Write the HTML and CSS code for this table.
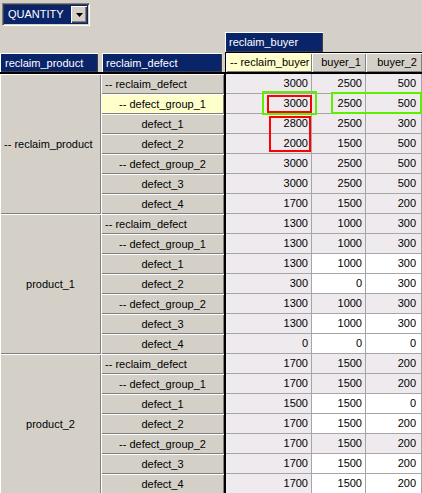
FILE: index.html
```html
<!DOCTYPE html>
<html>
<head>
<meta charset="utf-8">
<link rel="stylesheet" href="styles.css">
</head>
<body>
<div class="toolbar">
  <div class="combo">
    <span class="combo-value">QUANTITY</span>
    <span class="combo-btn"><svg width="7" height="4" viewBox="0 0 7 4"><polygon points="0,0 7,0 3.5,4" fill="#000"/></svg></span>
  </div>
</div>
<div class="pivot">
  <div class="rowpane">
    <div class="rowheads">
      <div class="field field-product">reclaim_product</div>
      <div class="field field-defect">reclaim_defect</div>
    </div>
    <div class="rowbody">
      <div class="group">
        <div class="prod prod-left">-- reclaim_product</div>
        <div class="defects">
          <div class="dcell dcell-left">-- reclaim_defect</div>
          <div class="dcell dcell-hl">-- defect_group_1</div>
          <div class="dcell">defect_1</div>
          <div class="dcell">defect_2</div>
          <div class="dcell">-- defect_group_2</div>
          <div class="dcell">defect_3</div>
          <div class="dcell">defect_4</div>
        </div>
      </div>
      <div class="group">
        <div class="prod">product_1</div>
        <div class="defects">
          <div class="dcell dcell-left">-- reclaim_defect</div>
          <div class="dcell">-- defect_group_1</div>
          <div class="dcell">defect_1</div>
          <div class="dcell">defect_2</div>
          <div class="dcell">-- defect_group_2</div>
          <div class="dcell">defect_3</div>
          <div class="dcell">defect_4</div>
        </div>
      </div>
      <div class="group">
        <div class="prod">product_2</div>
        <div class="defects">
          <div class="dcell dcell-left">-- reclaim_defect</div>
          <div class="dcell">-- defect_group_1</div>
          <div class="dcell">defect_1</div>
          <div class="dcell">defect_2</div>
          <div class="dcell">-- defect_group_2</div>
          <div class="dcell">defect_3</div>
          <div class="dcell">defect_4</div>
        </div>
      </div>
    </div>
  </div>
  <div class="datapane">
    <div class="field field-buyer">reclaim_buyer</div>
    <div class="colheads">
      <div class="ch ch-total">-- reclaim_buyer</div>
      <div class="ch ch-b1">buyer_1</div>
      <div class="ch ch-b2">buyer_2</div>
    </div>
    <div class="databody">
      <div class="row"><div class="c c1">3000</div><div class="c c2">2500</div><div class="c c3">500</div></div>
      <div class="row"><div class="c c1">3000</div><div class="c c2">2500</div><div class="c c3">500</div></div>
      <div class="row"><div class="c c1">2800</div><div class="c c2">2500</div><div class="c c3">300</div></div>
      <div class="row"><div class="c c1">2000</div><div class="c c2">1500</div><div class="c c3">500</div></div>
      <div class="row"><div class="c c1">3000</div><div class="c c2">2500</div><div class="c c3">500</div></div>
      <div class="row"><div class="c c1">3000</div><div class="c c2">2500</div><div class="c c3">500</div></div>
      <div class="row"><div class="c c1">1700</div><div class="c c2">1500</div><div class="c c3">200</div></div>

      <div class="row"><div class="c c1">1300</div><div class="c c2">1000</div><div class="c c3">300</div></div>
      <div class="row"><div class="c c1">1300</div><div class="c c2">1000</div><div class="c c3">300</div></div>
      <div class="row leaf"><div class="c c1">1300</div><div class="c c2">1000</div><div class="c c3">300</div></div>
      <div class="row leaf"><div class="c c1">300</div><div class="c c2">0</div><div class="c c3">300</div></div>
      <div class="row"><div class="c c1">1300</div><div class="c c2">1000</div><div class="c c3">300</div></div>
      <div class="row leaf"><div class="c c1">1300</div><div class="c c2">1000</div><div class="c c3">300</div></div>
      <div class="row leaf"><div class="c c1">0</div><div class="c c2">0</div><div class="c c3">0</div></div>

      <div class="row"><div class="c c1">1700</div><div class="c c2">1500</div><div class="c c3">200</div></div>
      <div class="row"><div class="c c1">1700</div><div class="c c2">1500</div><div class="c c3">200</div></div>
      <div class="row leaf"><div class="c c1">1500</div><div class="c c2">1500</div><div class="c c3">0</div></div>
      <div class="row leaf"><div class="c c1">1700</div><div class="c c2">1500</div><div class="c c3">200</div></div>
      <div class="row"><div class="c c1">1700</div><div class="c c2">1500</div><div class="c c3">200</div></div>
      <div class="row leaf"><div class="c c1">1700</div><div class="c c2">1500</div><div class="c c3">200</div></div>
      <div class="row leaf"><div class="c c1">1700</div><div class="c c2">1500</div><div class="c c3">200</div></div>

      <div class="mark green g1"></div>
      <div class="mark green g2"></div>
      <div class="mark red r1"></div>
      <div class="mark red r2"></div>
    </div>
  </div>
</div>
</body>
</html>
```
FILE: styles.css
```css
* { box-sizing: border-box; }
html, body {
  margin: 0;
  padding: 0;
  background: #d4d0c8;
  font-family: "Liberation Sans", Arial, sans-serif;
  font-size: 11px;
  color: #000;
  overflow: hidden;
}
.toolbar {
  height: 32px;
  padding: 3px 0 0 2px;
}
.combo {
  display: flex;
  width: 88px;
  height: 23px;
  border-top: 1px solid #808080;
  border-left: 1px solid #808080;
  border-right: 1px solid #fff;
  border-bottom: 1px solid #fff;
  box-shadow: inset 1px 1px #404040, inset -1px -1px #d4d0c8;
  padding: 2px;
  background: #0a246a;
}
.combo-value {
  flex: 1;
  color: #fff;
  line-height: 17px;
  padding-left: 3px;
  font-size: 11px;
}
.combo-btn {
  width: 16px;
  background: #d4d0c8;
  box-shadow: inset 1px 1px #fff, inset -1px -1px #404040, inset -2px -2px #808080;
  display: flex;
  align-items: center;
  justify-content: center;
}
.pivot {
  display: flex;
}
.rowpane {
  width: 225px;
  padding-top: 21px;
}
.field {
  background: #0a246a;
  color: #fff;
  height: 19px;
  line-height: 19px;
  padding-left: 4px;
  padding-top: 1px;
  line-height: 18px;
  box-shadow: inset 1px 1px #fff, inset -1px -1px #404040;
  white-space: nowrap;
}
.rowheads {
  display: flex;
  height: 19px;
}
.field-product { width: 98px; padding-left: 5px; }
.field-defect { width: 120px; margin-left: 4px; }
.rowbody {
  border-top: 2px solid #000;
  border-right: 1px solid #000;
}
.group {
  display: flex;
}
.prod {
  width: 101px;
  height: 140px;
  display: flex;
  align-items: center;
  justify-content: center;
  box-shadow: inset 1px 1px #fff, inset -1px -1px #808080;
  white-space: nowrap;
}
.prod-left { justify-content: flex-start; padding-left: 4px; }
.defects {
  flex: 1;
}
.dcell {
  height: 20px;
  line-height: 20px;
  text-align: center;
  box-shadow: inset 1px 1px #fff, inset -1px -1px #808080;
  white-space: nowrap;
}
.dcell-left { text-align: left; padding-left: 4px; }
.dcell-hl { background: #ffffcc; }
.datapane {
  flex: 1;
}
.field-buyer {
  width: 98px;
  height: 20px;
  line-height: 19px;
}
.colheads {
  display: flex;
  border-top: 1px solid #000;
  border-left: 1px solid #000;
  height: 20px;
}
.ch {
  height: 19px;
  line-height: 19px;
  box-shadow: inset 1px 1px #fff, inset -1px -1px #808080;
  text-align: right;
  padding-right: 5px;
  white-space: nowrap;
}
.ch-total { width: 86px; background: #ffffcc; text-align: left; padding-left: 4px; }
.ch-b1 { width: 54px; }
.ch-b2 { flex: 1; }
.databody {
  position: relative;
  border-top: 2px solid #000;
  border-left: 1px solid #000;
}
.row {
  display: flex;
  height: 20px;
}
.c {
  height: 20px;
  line-height: 19px;
  background: #eeeaee;
  border-right: 1px solid #a6a6a6;
  border-bottom: 1px solid #a6a6a6;
  text-align: right;
  padding-right: 3px;
}
.c1 { width: 86px; }
.c2 { width: 54px; }
.c3 { flex: 1; padding-right: 5px; }
.leaf .c2, .leaf .c3 { background: #fff; }
.mark {
  position: absolute;
  border: 2px solid;
}
.green { border-color: #5cf000; }
.red { border-color: #ff0000; }
.g1 { left: 36px; top: 17px; width: 55px; height: 24px; }
.g2 { left: 105px; top: 18px; width: 91px; height: 22px; }
.r1 { left: 41px; top: 21px; width: 45px; height: 18px; }
.r2 { left: 43px; top: 42px; width: 42px; height: 36px; }
```
